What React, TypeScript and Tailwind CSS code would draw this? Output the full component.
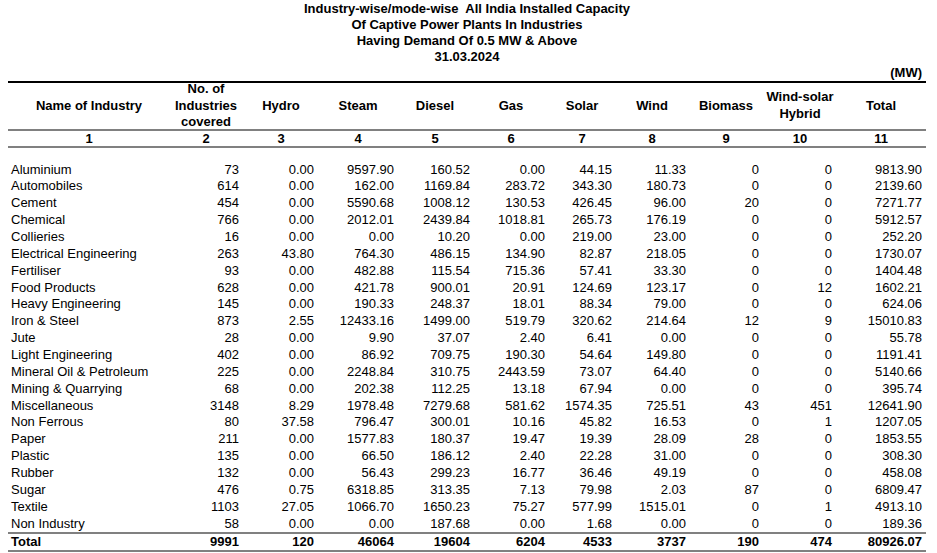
const rows: [string, ...string[]][] = [
  ['Aluminium', '73', '0.00', '9597.90', '160.52', '0.00', '44.15', '11.33', '0', '0', '9813.90'],
  ['Automobiles', '614', '0.00', '162.00', '1169.84', '283.72', '343.30', '180.73', '0', '0', '2139.60'],
  ['Cement', '454', '0.00', '5590.68', '1008.12', '130.53', '426.45', '96.00', '20', '0', '7271.77'],
  ['Chemical', '766', '0.00', '2012.01', '2439.84', '1018.81', '265.73', '176.19', '0', '0', '5912.57'],
  ['Collieries', '16', '0.00', '0.00', '10.20', '0.00', '219.00', '23.00', '0', '0', '252.20'],
  ['Electrical Engineering', '263', '43.80', '764.30', '486.15', '134.90', '82.87', '218.05', '0', '0', '1730.07'],
  ['Fertiliser', '93', '0.00', '482.88', '115.54', '715.36', '57.41', '33.30', '0', '0', '1404.48'],
  ['Food Products', '628', '0.00', '421.78', '900.01', '20.91', '124.69', '123.17', '0', '12', '1602.21'],
  ['Heavy Engineering', '145', '0.00', '190.33', '248.37', '18.01', '88.34', '79.00', '0', '0', '624.06'],
  ['Iron & Steel', '873', '2.55', '12433.16', '1499.00', '519.79', '320.62', '214.64', '12', '9', '15010.83'],
  ['Jute', '28', '0.00', '9.90', '37.07', '2.40', '6.41', '0.00', '0', '0', '55.78'],
  ['Light Engineering', '402', '0.00', '86.92', '709.75', '190.30', '54.64', '149.80', '0', '0', '1191.41'],
  ['Mineral Oil & Petroleum', '225', '0.00', '2248.84', '310.75', '2443.59', '73.07', '64.40', '0', '0', '5140.66'],
  ['Mining & Quarrying', '68', '0.00', '202.38', '112.25', '13.18', '67.94', '0.00', '0', '0', '395.74'],
  ['Miscellaneous', '3148', '8.29', '1978.48', '7279.68', '581.62', '1574.35', '725.51', '43', '451', '12641.90'],
  ['Non Ferrous', '80', '37.58', '796.47', '300.01', '10.16', '45.82', '16.53', '0', '1', '1207.05'],
  ['Paper', '211', '0.00', '1577.83', '180.37', '19.47', '19.39', '28.09', '28', '0', '1853.55'],
  ['Plastic', '135', '0.00', '66.50', '186.12', '2.40', '22.28', '31.00', '0', '0', '308.30'],
  ['Rubber', '132', '0.00', '56.43', '299.23', '16.77', '36.46', '49.19', '0', '0', '458.08'],
  ['Sugar', '476', '0.75', '6318.85', '313.35', '7.13', '79.98', '2.03', '87', '0', '6809.47'],
  ['Textile', '1103', '27.05', '1066.70', '1650.23', '75.27', '577.99', '1515.01', '0', '1', '4913.10'],
  ['Non Industry', '58', '0.00', '0.00', '187.68', '0.00', '1.68', '0.00', '0', '0', '189.36'],
];

const total = ['Total', '9991', '120', '46064', '19604', '6204', '4533', '3737', '190', '474', '80926.07'];

const widths = ['w-[162px]', 'w-[72px]', 'w-[78px]', 'w-[76px]', 'w-[78px]', 'w-[74px]', 'w-[68px]', 'w-[72px]', 'w-[76px]', 'w-[72px]', 'w-[90px]'];
// alignment + right padding per column so the figures line up like the source sheet
const pads = ['pl-[3px] text-left', 'pr-[3px] text-right', 'pr-[6px] text-right', 'pr-[2px] text-right', 'pr-[4px] text-right', 'pr-[3px] text-right', 'pr-[4px] text-right', 'pr-[2px] text-right', 'pr-[5px] text-right', 'pr-[4px] text-right', 'pr-[4px] text-right'];

const heads = ['Name of Industry', 'No. of\nIndustries\ncovered', 'Hydro', 'Steam', 'Diesel', 'Gas', 'Solar', 'Wind', 'Biomass', 'Wind-solar\nHybrid', 'Total'];

export default function App() {
  return (
    <div className="w-[937px] h-[553px] bg-white text-black text-[13px] font-['Liberation_Sans',Arial,sans-serif] overflow-hidden">
      <div className="pt-px pl-[8px] w-[926px]">
        <div className="text-center font-bold leading-4">
          <div className="whitespace-pre">Industry-wise/mode-wise  All India Installed Capacity</div>
          <div>Of Captive Power Plants In Industries</div>
          <div>Having Demand Of 0.5 MW &amp; Above</div>
          <div>31.03.2024</div>
        </div>
        <div className="text-right font-bold leading-4 pr-[4px]">(MW)</div>

        <table className="w-[918px] table-fixed border-collapse">
          <colgroup>
            {widths.map((w, i) => (
              <col key={i} className={w} />
            ))}
          </colgroup>
          <thead>
            <tr className="border-t-2 border-b-2 border-t-black border-b-[#808080]">
              {heads.map((h, i) => (
                <th key={i} className="h-[46px] p-0 font-bold text-center align-middle">
                  <div className="whitespace-pre-line leading-[16.5px] -my-[2px]">{h}</div>
                </th>
              ))}
            </tr>
            <tr className="border-b-2 border-b-[#808080]">
              {Array.from({ length: 11 }, (_, i) => (
                <th key={i} className="h-[15px] p-0 leading-[15px] font-bold text-center">{i + 1}</th>
              ))}
            </tr>
          </thead>
          <tbody>
            <tr>
              <td colSpan={11} className="h-[15px] p-0" />
            </tr>
            {rows.map((r) => (
              <tr key={r[0]}>
                {r.map((c, i) => (
                  <td key={i} className={`h-[16.86px] leading-[16.86px] p-0 whitespace-nowrap ${pads[i]}`}>{c}</td>
                ))}
              </tr>
            ))}
            <tr className="border-t-2 border-b-2 border-[#808080]">
              {total.map((c, i) => (
                <td key={i} className={`h-[16px] leading-[16px] p-0 font-bold whitespace-nowrap ${pads[i]}`}>{c}</td>
              ))}
            </tr>
          </tbody>
        </table>
      </div>
    </div>
  );
}
